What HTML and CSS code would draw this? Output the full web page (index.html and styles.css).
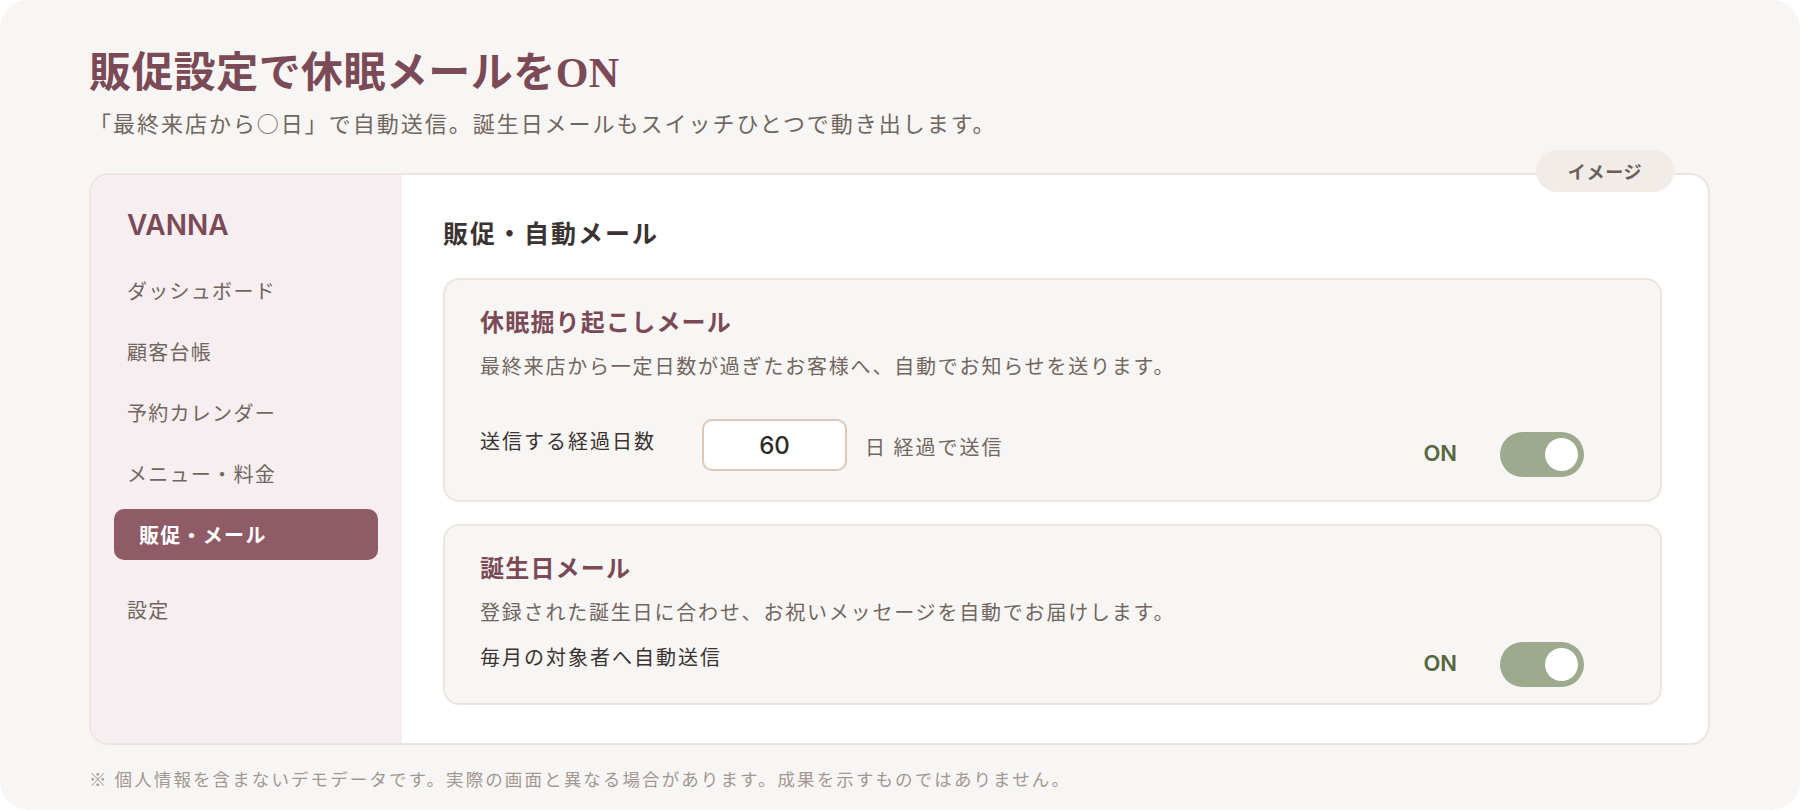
FILE: index.html
```html
<!DOCTYPE html>
<html lang="ja">
    <head>
        <meta charset="UTF-8">
        <meta name="viewport" content="width=device-width, initial-scale=1.0">
        <title>販促設定で休眠メールをON</title>
        <link rel="stylesheet" href="styles.css">
    </head>
    <body>
        <div class="page">
            <header class="intro">
                <h1 class="intro__title">販促設定で休眠メールを<span class="intro__latin">ON</span></h1>
                <p class="intro__lead">「最終来店から○日」で自動送信。誕生日メールもスイッチひとつで動き出します。</p>
            </header>

            <section class="shot">
                <span class="shot__badge">イメージ</span>

                <aside class="side">
                    <div class="side__brand">VANNA</div>
                    <nav class="side__nav">
                        <a class="side__item">ダッシュボード</a>
                        <a class="side__item">顧客台帳</a>
                        <a class="side__item">予約カレンダー</a>
                        <a class="side__item">メニュー・料金</a>
                        <a class="side__item side__item--active">販促・メール</a>
                        <a class="side__item side__item--settings">設定</a>
                    </nav>
                </aside>

                <main class="panel">
                    <h2 class="panel__title">販促・自動メール</h2>

                    <div class="mail mail--dormant">
                        <h3 class="mail__title">休眠掘り起こしメール</h3>
                        <p class="mail__desc">最終来店から一定日数が過ぎたお客様へ、自動でお知らせを送ります。</p>
                        <div class="mail__row">
                            <div class="mail__field">
                                <span class="mail__label">送信する経過日数</span>
                                <span class="mail__input">60</span>
                                <span class="mail__unit">日 経過で送信</span>
                            </div>
                            <div class="switch">
                                <span class="switch__state">ON</span>
                                <span class="switch__track"><span class="switch__knob"></span></span>
                            </div>
                        </div>
                    </div>

                    <div class="mail mail--birthday">
                        <h3 class="mail__title">誕生日メール</h3>
                        <p class="mail__desc">登録された誕生日に合わせ、お祝いメッセージを自動でお届けします。</p>
                        <div class="mail__row">
                            <span class="mail__label">毎月の対象者へ自動送信</span>
                            <div class="switch">
                                <span class="switch__state">ON</span>
                                <span class="switch__track"><span class="switch__knob"></span></span>
                            </div>
                        </div>
                    </div>
                </main>
            </section>

            <p class="note">※ 個人情報を含まないデモデータです。実際の画面と異なる場合があります。成果を示すものではありません。</p>
        </div>
    </body>
</html>
```

FILE: styles.css
```css
:root {
    --color-page: #f8f6f4;
    --color-line: #ece5e0;
    --color-brand: #7b4a57;
    --color-brand-fill: #8e5b67;
    --color-side: #f6eef0;
    --color-text: #3b3331;
    --color-muted: #71665f;
    --color-faint: #a39891;
    --color-switch: #9daa8e;
    --color-switch-text: #56663f;
}

html,
body {
    margin: 0;
    padding: 0;
    background-color: #fff;
}

body {
    font-family: "Noto Sans CJK JP", sans-serif;
    color: var(--color-text);
    letter-spacing: 0.08em;
}

.page {
    box-sizing: border-box;
    height: 100vh;
    padding: 41px 90px 0 89px;
    background-color: var(--color-page);
    border-radius: 28px;
}

/* heading block */

.intro__title {
    margin: 0;
    font-size: 42px;
    line-height: 56px;
    font-weight: 700;
    letter-spacing: 0.01em;
    color: var(--color-brand);
}

.intro__latin {
    font-family: "Liberation Serif", serif;
}

.intro__lead {
    margin: 5px 0 0;
    font-size: 22px;
    line-height: 32px;
    letter-spacing: 0.09em;
    color: var(--color-muted);
}

/* app screenshot frame */

.shot {
    position: relative;
    display: grid;
    grid-template-columns: 311px 1fr;
    margin-top: 35px;
    border: 2px solid var(--color-line);
    border-radius: 20px;
    background-color: #fff;
}

.shot__badge {
    position: absolute;
    top: -25px;
    right: 34px;
    display: flex;
    align-items: center;
    justify-content: center;
    width: 138px;
    height: 42px;
    border-radius: 21px;
    background-color: #f1ece8;
    font-size: 18px;
    font-weight: 700;
    letter-spacing: 0.04em;
    color: #6b5f5a;
}

.side {
    padding: 33px 24px 0 23px;
    background-color: var(--color-side);
    border-radius: 18px 0 0 18px;
}

.side__brand {
    margin-left: 13px;
    font-family: Inter, sans-serif;
    font-size: 28px;
    line-height: 34px;
    font-weight: 600;
    letter-spacing: 0;
    color: var(--color-brand);
}

.side__nav {
    display: flex;
    flex-direction: column;
    gap: 10px;
    margin-top: 23px;
}

.side__item {
    height: 51px;
    padding: 0 13px;
    border-radius: 10px;
    font-size: 20px;
    line-height: 51px;
    color: var(--color-muted);
}

.side__item--active {
    padding-left: 25px;
    background-color: var(--color-brand-fill);
    font-weight: 700;
    color: #fff;
}

.side__item--settings {
    margin-top: 14px;
}

.panel {
    padding: 40px 46px 38px 41px;
    border-radius: 0 18px 18px 0;
}

.panel__title {
    margin: 0 0 28px;
    font-size: 25px;
    line-height: 35px;
    font-weight: 700;
    letter-spacing: 0.08em;
    color: var(--color-text);
}

/* mail setting cards */

.mail {
    padding: 24px 76px 23px 35px;
    border: 2px solid var(--color-line);
    border-radius: 16px;
    background-color: var(--color-page);
}

.mail + .mail {
    margin-top: 22px;
}

.mail--birthday {
    padding-bottom: 16px;
}

.mail__title {
    margin: 0;
    font-size: 24px;
    line-height: 34px;
    font-weight: 700;
    letter-spacing: 0.05em;
    color: var(--color-brand);
}

.mail__desc {
    margin: 13px 0 0;
    font-size: 20px;
    line-height: 30px;
    letter-spacing: 0.09em;
    color: var(--color-muted);
}

.mail__row {
    display: flex;
    align-items: flex-start;
    justify-content: space-between;
    margin-top: 15px;
}

.mail--dormant .mail__row {
    margin-top: 38px;
}

.mail--dormant .switch {
    margin-top: 13px;
}

.mail__field {
    display: flex;
    align-items: center;
}

.mail__label {
    font-size: 20px;
    line-height: 30px;
    letter-spacing: 0.1em;
    color: var(--color-text);
}

.mail__field .mail__label {
    margin-bottom: 8px;
}

.mail__input {
    box-sizing: border-box;
    display: flex;
    align-items: center;
    justify-content: center;
    width: 145px;
    height: 52px;
    margin-left: 46px;
    border: 2px solid #dbc8b9;
    border-radius: 10px;
    background-color: #fff;
    font-family: Inter, sans-serif;
    font-size: 24px;
    font-weight: 500;
    letter-spacing: 0;
    color: #2f2a28;
}

.mail__unit {
    margin-left: 18px;
    padding-top: 3px;
    font-size: 20px;
    line-height: 30px;
    letter-spacing: 0.1em;
    color: var(--color-muted);
}

/* on/off switch */

.switch {
    display: flex;
    align-items: center;
    gap: 43px;
}

.switch__state {
    padding-bottom: 3px;
    font-family: Inter, sans-serif;
    font-size: 22px;
    font-weight: 600;
    letter-spacing: 0;
    color: var(--color-switch-text);
}

.switch__track {
    box-sizing: border-box;
    display: flex;
    justify-content: flex-end;
    width: 84px;
    height: 45px;
    padding: 6px;
    border-radius: 23px;
    background-color: var(--color-switch);
}

.switch__knob {
    width: 33px;
    height: 33px;
    border-radius: 50%;
    background-color: #fff;
}

.note {
    margin: 21px 0 0;
    font-size: 17.5px;
    line-height: 26px;
    letter-spacing: 0.12em;
    color: var(--color-faint);
}
```
